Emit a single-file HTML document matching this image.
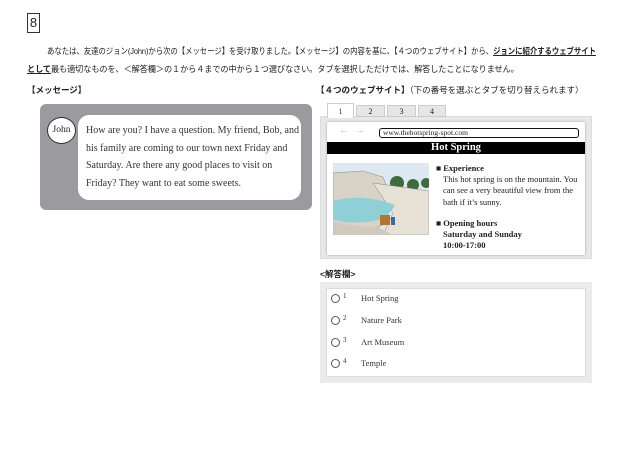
<!DOCTYPE html>
<html><head><meta charset="utf-8"><style>
*{margin:0;padding:0;box-sizing:border-box}
body{width:640px;height:453px;background:#fff;position:relative;font-family:"Liberation Sans","Noto Sans CJK JP",sans-serif;color:#222;overflow:hidden}
.a{position:absolute}
.jp{font-size:8.6px;white-space:nowrap;letter-spacing:-0.1px}
.serif{font-family:"Liberation Serif",serif}
.row{position:absolute;left:331px;font-family:"Liberation Serif",serif;font-size:8.5px;color:#333;white-space:nowrap}
.rad{position:absolute;left:0;top:1px;width:9px;height:9px;border:1px solid #555;border-radius:50%}
.num{position:absolute;left:12px;top:-1px;font-size:7px}
.lab{position:absolute;left:30px;top:0}
</style></head><body>
<div class="a" style="left:27px;top:13px;width:13px;height:20px;border:1px solid #333;font-size:13px;text-align:center;line-height:18px">8</div>
<div class="a jp" style="left:47px;top:45px;transform:scaleX(0.865);transform-origin:0 0">あなたは、友達のジョン(John)から次の【メッセージ】を受け取りました。【メッセージ】の内容を基に、【４つのウェブサイト】から、<b><u>ジョンに紹介するウェブサイト</u></b></div>
<div class="a jp" style="left:27px;top:63px;transform:scaleX(0.95);transform-origin:0 0"><b><u>として</u></b>最も適切なものを、＜解答欄＞の１から４までの中から１つ選びなさい。タブを選択しただけでは、解答したことになりません。</div>
<div class="a jp" style="left:27px;top:84px;font-weight:bold">【メッセージ】</div>
<div class="a jp" style="left:316px;top:84px"><b>【４つのウェブサイト】</b>（下の番号を選ぶとタブを切り替えられます）</div>

<div class="a" style="left:40px;top:104px;width:272px;height:106px;background:#9b9b9f;border-radius:6px"></div>
<div class="a serif" style="left:78px;top:115px;width:223px;height:85px;background:#fff;border-radius:11px;padding:7px 0 0 8px;font-size:10px;line-height:17.5px;color:#333">How are you? I have a question. My friend, Bob, and his family are coming to our town next Friday and Saturday. Are there any good places to visit on Friday? They want to eat some sweets.</div>
<div class="a serif" style="left:47px;top:117px;width:29px;height:27px;background:#fff;border:1.5px solid #333;border-radius:50%;font-size:9.5px;text-align:center;line-height:24px">John</div>

<div class="a" style="left:320px;top:116px;width:272px;height:143px;background:#e8e8e8;border:1px solid #ddd"></div>
<div class="a serif" style="left:327px;top:103px;width:27px;height:15px;background:#fff;border:1px solid #ccc;border-bottom:none;font-size:8px;text-align:center;line-height:15px;color:#246">1</div>
<div class="a serif" style="left:356px;top:105px;width:29px;height:12px;background:#e6e6e6;border:1px solid #ccc;font-size:8px;text-align:center;line-height:12px">2</div>
<div class="a serif" style="left:387px;top:105px;width:29px;height:12px;background:#e6e6e6;border:1px solid #ccc;font-size:8px;text-align:center;line-height:12px">3</div>
<div class="a serif" style="left:418px;top:105px;width:28px;height:12px;background:#e6e6e6;border:1px solid #ccc;font-size:8px;text-align:center;line-height:12px">4</div>
<div class="a" style="left:327px;top:122px;width:258px;height:133px;background:#fff;box-shadow:0 0 2px #999"></div>
<div class="a" style="left:339px;top:125px;font-size:10px;color:#bbb">← &nbsp;→</div>
<div class="a serif" style="left:379px;top:128px;width:200px;height:10px;border:1.5px solid #111;border-radius:3px;font-size:7.5px;line-height:7px;padding-left:3px">www.thehotspring-spot.com</div>
<div class="a serif" style="left:327px;top:142px;width:258px;height:12px;background:#000;color:#fff;font-weight:bold;font-size:10.5px;text-align:center;line-height:12px">Hot Spring</div>
<svg class="a" style="left:333px;top:163px" width="96" height="72" viewBox="0 0 96 72">
<rect width="96" height="72" fill="#dde9f2"/>
<circle cx="64" cy="20" r="7" fill="#3d6b3a"/><circle cx="80" cy="22" r="6" fill="#3d6b3a"/><circle cx="93" cy="20" r="5" fill="#3d6b3a"/>
<path d="M0 10 L30 8 L50 14 L60 40 L50 62 L20 72 L0 72Z" fill="#d8d3c6" stroke="#888" stroke-width=".5"/>
<path d="M40 20 L96 28 L96 72 L50 72 L60 50Z" fill="#e6e1d4" stroke="#888" stroke-width=".5"/>
<path d="M0 38 Q30 30 62 42 Q55 55 40 58 Q15 62 0 56Z" fill="#8fd0d6"/>
<rect x="47" y="52" width="10" height="10" fill="#b5742f"/><rect x="58" y="54" width="4" height="8" fill="#3a6aa0"/>
<path d="M0 58 Q30 66 45 64 L60 72 L0 72Z" fill="#cfcabc"/>
</svg>
<div class="a serif" style="left:436px;top:163px;font-size:8.5px;line-height:11.2px;color:#222;width:145px">
<b>■ Experience</b><br><div style="padding-left:7px">This hot spring is on the mountain. You can see a very beautiful view from the bath if it’s sunny.</div><div style="height:10px"></div><b>■ Opening hours<br><span style="padding-left:7px">Saturday and Sunday</span><br><span style="padding-left:7px">10:00-17:00</span></b></div>

<div class="a jp" style="left:320px;top:268px;font-weight:bold">&lt;解答欄&gt;</div>
<div class="a" style="left:320px;top:282px;width:272px;height:101px;background:#ebebeb"></div>
<div class="a" style="left:326px;top:288px;width:260px;height:89px;background:#fff;border:1px solid #ddd"></div>
<div class="row" style="top:293px"><span class="rad"></span><span class="num">1</span><span class="lab">Hot Spring</span></div>
<div class="row" style="top:315px"><span class="rad"></span><span class="num">2</span><span class="lab">Nature Park</span></div>
<div class="row" style="top:337px"><span class="rad"></span><span class="num">3</span><span class="lab">Art Museum</span></div>
<div class="row" style="top:358px"><span class="rad"></span><span class="num">4</span><span class="lab">Temple</span></div>
</body></html>
